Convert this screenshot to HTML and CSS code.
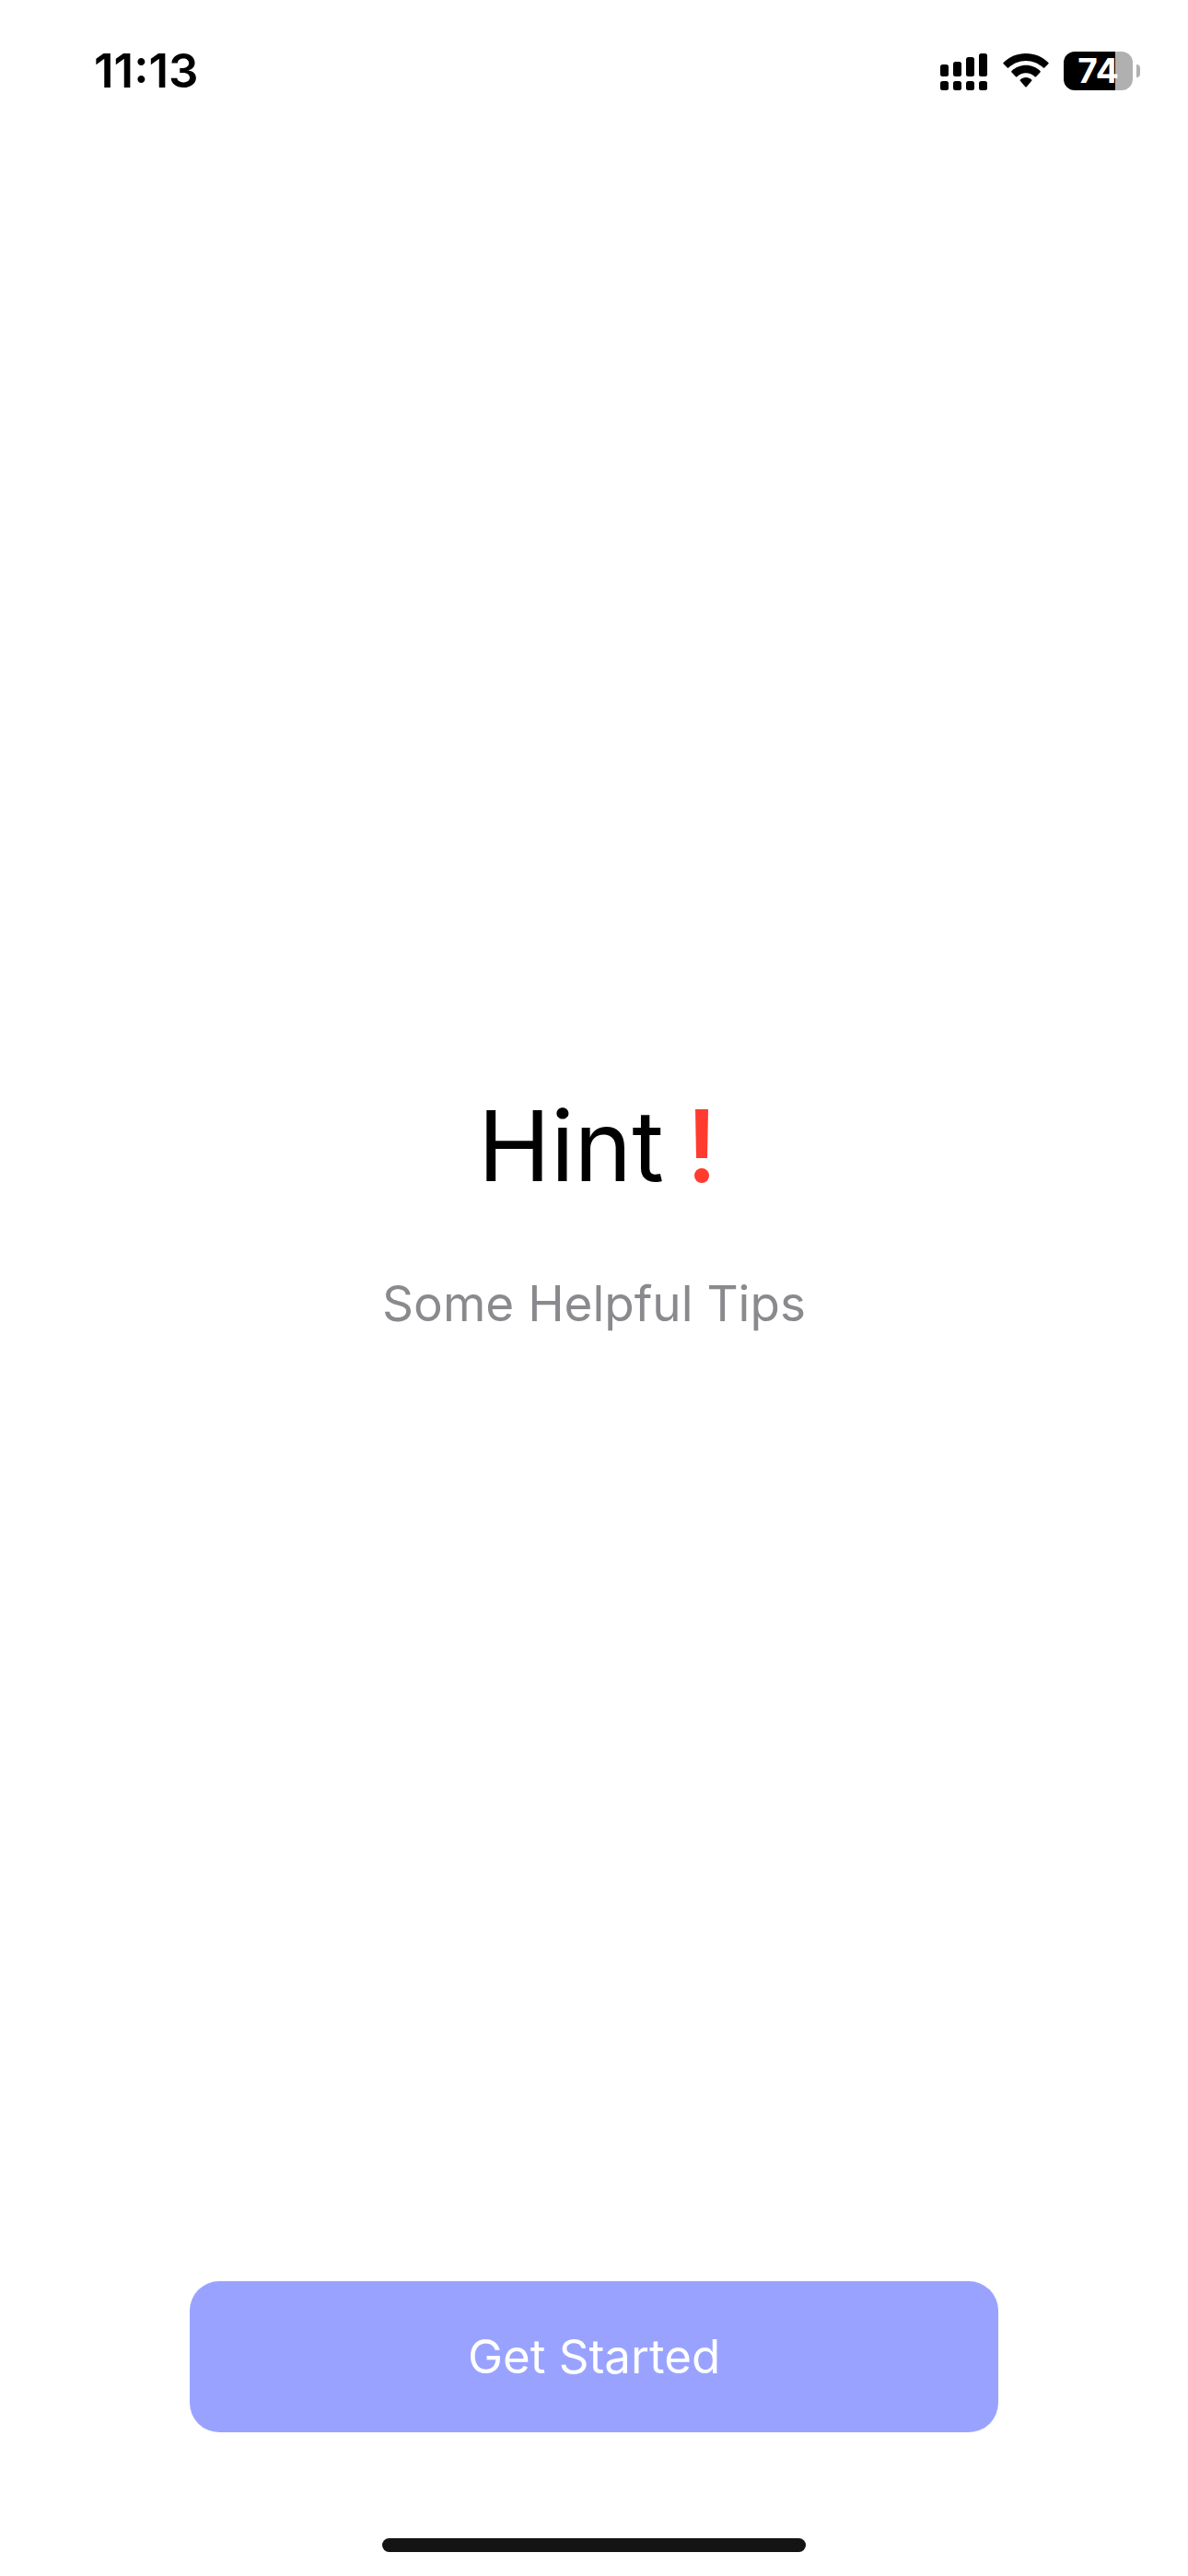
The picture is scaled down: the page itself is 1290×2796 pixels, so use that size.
FILE: index.html
```html
<!DOCTYPE html>
<html lang="en">

<head>
    <meta charset="UTF-8">
    <meta name="viewport" content="width=device-width, initial-scale=1.0">
    <title>Hint</title>
    <link rel="stylesheet" href="styles.css">
</head>

<body>
    <header class="status-bar">
        <div class="time">11:13</div>
        <div class="status-icons">
            <svg class="signal" width="52" height="42" viewBox="0 0 52 42" aria-hidden="true">
                <rect x="0" y="14" width="9" height="13" rx="2.500" />
                <rect x="14" y="11" width="9" height="16" rx="2.500" />
                <rect x="28" y="6" width="9" height="21" rx="2.500" />
                <rect x="42" y="2" width="9" height="25" rx="2.500" />
                <rect x="0" y="32" width="9" height="10" rx="2.500" />
                <rect x="14" y="32" width="9" height="10" rx="2.500" />
                <rect x="28" y="32" width="9" height="10" rx="2.500" />
                <rect x="42" y="32" width="9" height="10" rx="2.500" />
            </svg>
            <svg class="wifi" width="50" height="42" viewBox="0 0 50 42" aria-hidden="true">
                <path d="M25 2C15.500 2 7 5.600.6 11.900a1 1 0 0 0 0 1.400l4.200 4.200a1 1 0 0 0 1.400 0C11.200 12.900 17.800 10 25 10s13.800 2.900 18.800 7.500a1 1 0 0 0 1.400 0l4.200-4.200a1 1 0 0 0 0-1.400C43 5.600 34.500 2 25 2z" />
                <path d="M25 14.800c-6 0-11.500 2.400-15.500 6.200a1 1 0 0 0 0 1.400l4.500 4.800a1 1 0 0 0 1.400 0C18 24.700 21.300 23.200 25 23.200s7 1.500 9.600 4a1 1 0 0 0 1.400 0l4.500-4.800a1 1 0 0 0 0-1.400c-4-3.800-9.500-6.200-15.500-6.200z" />
                <path d="M25 28c-2.400 0-4.600.9-6.200 2.400a1 1 0 0 0 0 1.400l5.500 6.400a1 1 0 0 0 1.400 0l5.500-6.400a1 1 0 0 0 0-1.400C29.600 28.900 27.400 28 25 28z" />
            </svg>
            <div class="battery">
                <div class="battery-body">74</div>
                <div class="battery-cap"></div>
            </div>
        </div>
    </header>

    <main class="content">
        <h1 class="title">
            Hint
            <svg class="mark" width="18" height="80" viewBox="0 0 18 80" role="img" aria-label="!">
                <path d="M2 0h14l-1 53H3z" />
                <circle cx="9" cy="72" r="8" />
            </svg>
        </h1>
        <p class="subtitle">Some Helpful Tips</p>
    </main>

    <footer class="footer">
        <button class="start-button" type="button">Get Started</button>
        <div class="home-indicator"></div>
    </footer>
</body>

</html>
```
FILE: styles.css
```css
body {
    margin: 0;
    min-height: 100vh;
    display: flex;
    flex-direction: column;
    font-family: Inter, 'Liberation Sans', sans-serif;
    background-color: #fff;
    color: #000;
}

.status-bar {
    display: flex;
    justify-content: space-between;
    align-items: center;
    padding: 48px 52px 44px 102px;
}

.time {
    font-size: 51px;
    line-height: 58px;
    font-weight: 600;
}

.status-icons {
    display: flex;
    align-items: center;
    gap: 16px;
}

.battery {
    display: flex;
    align-items: center;
    gap: 4px;
}

.battery-body {
    width: 75px;
    height: 42px;
    border-radius: 12px;
    background: linear-gradient(to right, #000 75%, #b0b0b0 75%);
    color: #fff;
    font-size: 37px;
    line-height: 42px;
    font-weight: 700;
    text-align: center;
}

.battery-cap {
    width: 4px;
    height: 14px;
    border-radius: 0 4px 4px 0;
    background-color: #b0b0b0;
}

.content {
    flex: 1;
    display: flex;
    flex-direction: column;
    align-items: center;
    justify-content: center;
    gap: 73px;
}

.title {
    display: flex;
    align-items: center;
    gap: 32px;
    margin: 0;
    font-size: 106px;
    line-height: 130px;
    font-weight: 400;
}

.mark {
    fill: #ff3b30;
}

.subtitle {
    margin: 0;
    font-size: 53px;
    line-height: 66px;
    color: #8a8a8e;
}

.footer {
    display: flex;
    flex-direction: column;
    align-items: center;
    gap: 115px;
    padding-bottom: 26px;
}

.start-button {
    width: 68%;
    padding: 51px 0;
    border: none;
    border-radius: 32px;
    background-color: #99a3ff;
    color: #fff;
    font-family: inherit;
    font-size: 51px;
    line-height: 62px;
    cursor: pointer;
}

.home-indicator {
    width: 460px;
    height: 15px;
    border-radius: 8px;
    background-color: #141414;
}
```
